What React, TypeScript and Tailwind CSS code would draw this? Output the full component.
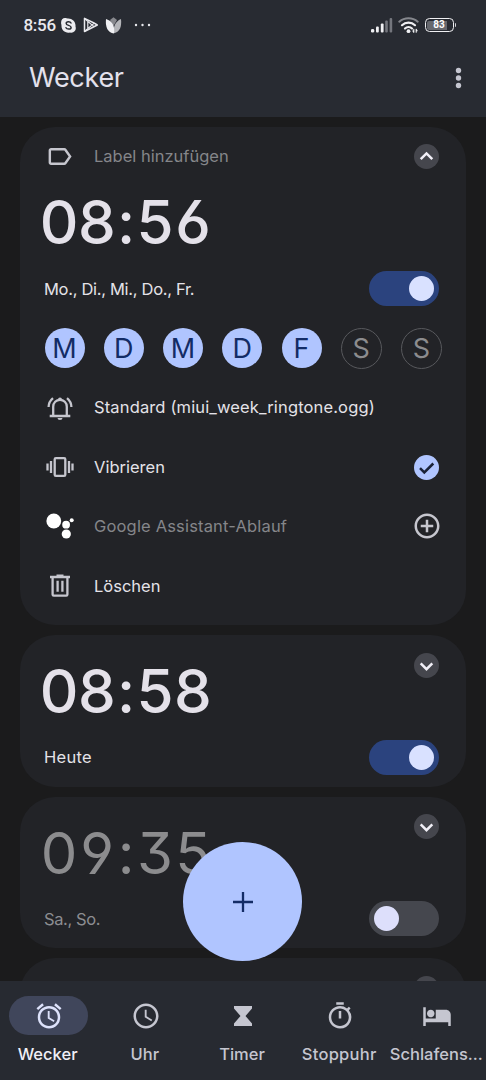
import type { ReactNode } from 'react';
import {
  MdAccessAlarm,
  MdAccessTime,
  MdControlPoint,
  MdHotel,
  MdLabelOutline,
  MdOutlineTimer,
} from 'react-icons/md';

function StatusBar() {
  return (
    <div className="flex h-[50px] items-center pl-[23.500px] pr-[30px] text-[#e9e9ee]">
      <span className="w-[34px] whitespace-nowrap font-[Roboto] text-[17px] font-medium leading-none tracking-[-0.3px]">8:56</span>
      <svg className="ml-[3px]" width="15" height="15" viewBox="0 0 15 15">
        <path d="M4 0c1 0 2 .3 2.500.5C10.800 0 15 3.500 14.500 8.500 15.800 12 13 15.500 9 14.500 4 15.500 0 12 .5 7-.8 3.500 1 0 4 0z" fill="#ececf0" />
        <path d="M10 5C9.300 3.400 5.200 3.300 5.200 5.400c0 2.500 4.900 1.400 4.900 4 0 2.200-4.200 2.200-5.100.3" fill="none" stroke="#282b32" strokeWidth="1.500" strokeLinecap="round" />
      </svg>
      <svg className="ml-[7px]" width="16" height="16" viewBox="0 0 16 16" fill="none" stroke="#e9e9ee" strokeWidth="1.500" strokeLinejoin="round">
        <path d="M1.500 1.300v13.200L14.300 8 11 6 1.500 1.300z" />
        <path d="M2 2l9 7.600M2 14l9-7.600M4.800 5v6" strokeWidth="1.200" />
      </svg>
      <svg className="ml-[6px]" width="17" height="17" viewBox="0 0 17 17">
        <path d="M5 3L8.500.3 12 3 8.500 9z" fill="#88898e" />
        <path d="M16 2c.8 8-1 12.500-7 14.300C8 10 10 4.500 16 2z" fill="#b4b5b9" />
        <path d="M1 2c6.500 2 9 7 8 14.500C2.500 15.500.2 10 1 2z" fill="#f0f0f3" />
      </svg>
      <svg className="ml-[12px]" width="17" height="4" viewBox="0 0 17 4" fill="#e9e9ee">
        <circle cx="2" cy="2" r="1.200" />
        <circle cx="8.500" cy="2" r="1.200" />
        <circle cx="15" cy="2" r="1.200" />
      </svg>
      <div className="grow" />
      <svg width="22" height="15" viewBox="0 0 22 15">
        <g fill="#f0f0f3">
          <rect x="0" y="11" width="3.200" height="3.500" rx="1.300" />
          <rect x="5" y="8.500" width="2.800" height="6" rx="1" />
          <rect x="9.800" y="5.500" width="2.800" height="9" rx="1" />
        </g>
        <g fill="#74767d">
          <rect x="14.200" y="2.500" width="2.600" height="12" rx="1" />
          <rect x="18.600" y="0" width="2.600" height="14.500" rx="1" />
        </g>
      </svg>
      <svg className="ml-[5px]" width="21" height="17" viewBox="0 0 21 17" fill="none" strokeLinecap="round">
        <path d="M1.300 4.700C6.500.1 14.500.1 19.700 4.700" stroke="#85878d" strokeWidth="2" />
        <path d="M4 8.200c3.600-3.400 9.400-3.400 13 0" stroke="#f0f0f3" strokeWidth="2.200" />
        <path d="M7 11.500c2-1.900 5-1.900 7 0" stroke="#f0f0f3" strokeWidth="2.200" />
        <circle cx="10.500" cy="14.200" r="1.900" fill="#f0f0f3" />
        <path d="M15.800 12.300v3M18.200 12.300v3M14.900 13.900l.9 1.400M19.100 13.700l-.9-1.400" stroke="#f0f0f3" strokeWidth="1.100" />
      </svg>
      <div className="ml-[6px] flex h-[14px] w-[29px] items-center justify-center rounded-[4.500px] border-[1.500px] border-[#f0f0f3] p-[1px]">
        <span className="flex h-[9px] w-full items-center justify-center rounded-[2px] bg-gradient-to-r from-[#66686e] from-80% to-transparent to-80% font-[Roboto] text-[10px] font-bold leading-none text-white">83</span>
      </div>
      <span className="ml-[1px] h-[4px] w-[1.500px] rounded-r-sm bg-[#d0d1d6]" />
    </div>
  );
}

function Time({ value, off }: { value: string; off?: boolean }) {
  return (
    <div className={off
      ? "flex text-[58px] font-normal leading-[60px] text-[#8c8c8e] [font-feature-settings:'ss01','cv03','cv04']"
      : "flex text-[60px] font-medium leading-[60px] text-[#e4e1e9] [font-feature-settings:'ss01','cv03','cv04']"}
    >
      {value.split('').map((c, i) => (
        <span key={i} className={c === ':' ? 'flex w-[20px] justify-center' : 'flex w-[38px] justify-center'}>{c}</span>
      ))}
    </div>
  );
}

function Toggle({ on }: { on?: boolean }) {
  return (
    <div className={on ? 'flex h-[35px] w-[70px] items-center justify-end rounded-full bg-[#2b437e] px-[5px]' : 'flex h-[35px] w-[70px] items-center justify-start rounded-full bg-[#45474e] px-[5px]'}>
      <span className={on ? 'h-[25px] w-[25px] rounded-full bg-[#d9e1ff]' : 'h-[25px] w-[25px] rounded-full bg-[#dddffb]'} />
    </div>
  );
}

function Chevron({ up }: { up?: boolean }) {
  return (
    <svg className="shrink-0" width="25" height="25" viewBox="0 0 25 25">
      <circle cx="12.500" cy="12.500" r="12.500" fill="#45464d" />
      <path d={up ? 'M6.700 15.200l5.800-5.800 5.800 5.800' : 'M6.700 10.400l5.800 5.800 5.800-5.800'} fill="none" stroke="#f1eff7" strokeWidth="2.500" />
    </svg>
  );
}

function Option({ icon, label, muted, action }: { icon: ReactNode; label: ReactNode; muted?: boolean; action?: ReactNode }) {
  return (
    <div className="flex h-[59.500px] items-center pl-[24.500px] pr-[27px]">
      <span className="flex w-[30px] justify-center text-[#c6c6ce]">{icon}</span>
      <span className={muted ? 'ml-[19.500px] grow whitespace-nowrap text-[#85868a]' : 'ml-[19.500px] grow whitespace-nowrap text-[#e4e2e8]'}>{label}</span>
      {action}
    </div>
  );
}

function ScheduleRow({ text, on }: { text: ReactNode; on?: boolean }) {
  return (
    <div className="flex h-[59px] items-center justify-between pl-[24px] pr-[27px]">
      <span className={on ? 'pt-[1px] text-[#e4e2e8]' : 'pt-[1px] text-[#8c8d91]'}>{text}</span>
      <Toggle on={on} />
    </div>
  );
}

function CompactAlarm({ time, text, on }: { time: string; text: ReactNode; on?: boolean }) {
  return (
    <section className="h-[151.500px] shrink-0 rounded-[35px] bg-[#222327]">
      <div className="flex h-[92.500px] justify-between pl-[20px] pr-[27px]">
        <div className="pt-[26px]"><Time value={time} off={!on} /></div>
        <div className="pt-[17.500px]"><Chevron /></div>
      </div>
      <ScheduleRow text={text} on={on} />
    </section>
  );
}

const days: [string, boolean][] = [
  ['M', true], ['D', true], ['M', true], ['D', true], ['F', true], ['S', false], ['S', false],
];

function Bell() {
  return (
    <svg width="26" height="26" viewBox="0 0 26 26" fill="none" stroke="currentColor" strokeWidth="2.300">
      <path d="M2.700 21H23.300M6.200 21V11.700c0-4 3-6.900 6.800-6.900s6.800 2.900 6.800 6.900V21M1.600 12c.1-3.700 1.700-6.700 4.400-8.900M24.400 12c-.1-3.700-1.700-6.700-4.400-8.900" />
      <path d="M11 4.500a2 2 0 014 0zM10.500 23h5a2.500 2.100 0 01-5 0z" fill="currentColor" stroke="none" />
    </svg>
  );
}

function Vibrate() {
  return (
    <svg width="28" height="22" viewBox="0 0 28 22" fill="none" stroke="currentColor" strokeWidth="2.300">
      <rect x="8.700" y="2.100" width="10.600" height="17.800" rx="1.200" />
      <path d="M1.500 7.500v7M5 5v12M23 5v12M26.500 7.500v7" />
    </svg>
  );
}

function Assistant() {
  return (
    <svg className="mb-[1px]" width="28" height="26" viewBox="0 0 28 26" fill="#fff">
      <circle cx="7.800" cy="8" r="7.400" />
      <circle cx="20.100" cy="11.700" r="3.900" />
      <circle cx="25.700" cy="7.300" r="2" />
      <circle cx="20.300" cy="21" r="4.600" />
    </svg>
  );
}

function Trash() {
  return (
    <svg width="20" height="24" viewBox="0 0 20 24" fill="none" stroke="currentColor" strokeWidth="2.300">
      <path d="M0 3h20M6.500 1.600h7M2.600 3v17.600c0 .7.400 1.100 1.100 1.100h12.600c.7 0 1.100-.4 1.100-1.100V3M7.600 6.800v11M12.400 6.800v11" />
    </svg>
  );
}

function NavItem({ icon, label, active }: { icon: ReactNode; label: ReactNode; active?: boolean }) {
  return (
    <div className={active ? 'flex w-1/5 flex-col items-center text-[#f0eff6]' : 'flex w-1/5 flex-col items-center text-[#c5c6d0]'}>
      <span className={active ? 'flex h-[39px] w-[79px] items-center justify-center rounded-full bg-[#40465b] text-[#dde2fb]' : 'flex h-[39px] w-[79px] items-center justify-center'}>{icon}</span>
      <span className="mr-[2px] mt-[9px] whitespace-nowrap text-[16.500px] font-medium leading-[20px]">{label}</span>
    </div>
  );
}

export default function App() {
  return (
    <div className="relative flex h-[1080px] w-[486px] flex-col overflow-hidden bg-[#1b1b1c] font-[Inter,sans-serif] text-[16.500px]">
      <header className="h-[117px] shrink-0 bg-[#282b32]">
        <StatusBar />
        <div className="flex h-[55px] items-center justify-between pl-[29px] pr-[24px]">
          <h1 className="text-[27px] leading-none tracking-[-0.300px] text-[#e3e1ec]">Wecker</h1>
          <svg width="7" height="22" viewBox="0 0 7 22" fill="#c5c6d0">
            <circle cx="3.500" cy="3.500" r="2.700" />
            <circle cx="3.500" cy="11" r="2.700" />
            <circle cx="3.500" cy="18.500" r="2.700" />
          </svg>
        </div>
      </header>

      <main className="flex min-h-0 grow flex-col gap-[10px] overflow-hidden px-[20px] pt-[10px]">
        <section className="h-[498px] shrink-0 rounded-[35px] bg-[#222327]">
          <Option icon={<MdLabelOutline size={29} />} label={<span>Label hinzufügen</span>} muted action={<Chevron up />} />
          <div className="h-[72.500px] pl-[20px] pt-[5.500px]"><Time value="08:56" /></div>
          <ScheduleRow text={<span className="tracking-[-0.300px]">Mo., Di., Mi., Do., Fr.</span>} on />
          <div className="flex h-[60px] items-center justify-between pl-[24.500px] pr-[24px]">
            {days.map(([d, on], i) => (
              <span
                key={i}
                className={on
                  ? 'flex h-[40px] w-[40px] items-center justify-center rounded-full bg-[#b0c5ff] text-[27px] leading-none text-[#132c66]'
                  : 'flex h-[41px] w-[41px] items-center justify-center rounded-full border border-[#58595d] text-[27px] leading-none text-[#8c8c8e]'}
              >
                {d}
              </span>
            ))}
          </div>
          <Option icon={<Bell />} label={<span className="tracking-[0.140px]">Standard (miui_week_ringtone.ogg)</span>} />
          <Option
            icon={<Vibrate />}
            label={<span>Vibrieren</span>}
            action={
              <svg width="25" height="25" viewBox="0 0 25 25">
                <circle cx="12.500" cy="12.500" r="12.500" fill="#b0c5ff" />
                <path d="M6 13.200l4.300 4.300 9-9" fill="none" stroke="#1a2238" strokeWidth="2.500" />
              </svg>
            }
          />
          <Option icon={<Assistant />} label={<span className="tracking-[0.170px]">Google Assistant-Ablauf</span>} muted action={<MdControlPoint size={30} className="-mr-[2.500px] mb-[1px] text-[#c6c6ce]" />} />
          <Option icon={<Trash />} label={<span>Löschen</span>} />
        </section>
        <CompactAlarm time="08:58" text={<span className="tracking-[0.300px]">Heute</span>} on />
        <CompactAlarm time="09:35" text={<span className="tracking-[-0.400px]">Sa., So.</span>} />
        <section className="flex h-[151.500px] shrink-0 items-start justify-end rounded-[35px] bg-[#222327] pr-[27px] pt-[17.500px]">
          <Chevron />
        </section>
      </main>

      <nav className="flex h-[99px] shrink-0 bg-[#272a31] pt-[15px]">
        <NavItem active icon={<MdAccessAlarm size={30} />} label={<span>Wecker</span>} />
        <NavItem icon={<MdAccessTime size={30} />} label={<span>Uhr</span>} />
        <NavItem
          icon={
            <svg width="18" height="20" viewBox="0 0 18 20" fill="currentColor">
              <path d="M0 0h18v2.500L11.500 10l6.500 7.500V20H0v-2.500L6.500 10 0 2.500z" />
            </svg>
          }
          label={<span>Timer</span>}
        />
        <NavItem icon={<MdOutlineTimer size={30} />} label={<span className="tracking-[0.250px]">Stoppuhr</span>} />
        <NavItem icon={<MdHotel size={30} />} label={<span>Schlafens...</span>} />
      </nav>

      <button aria-label="+" className="absolute left-[183px] top-[842px] flex h-[119px] w-[119px] items-center justify-center rounded-full bg-[#b0c5ff]">
        <svg width="20" height="20" viewBox="0 0 20 20" stroke="#132c66" strokeWidth="2.300">
          <path d="M10 0v20M0 10h20" />
        </svg>
      </button>
    </div>
  );
}
